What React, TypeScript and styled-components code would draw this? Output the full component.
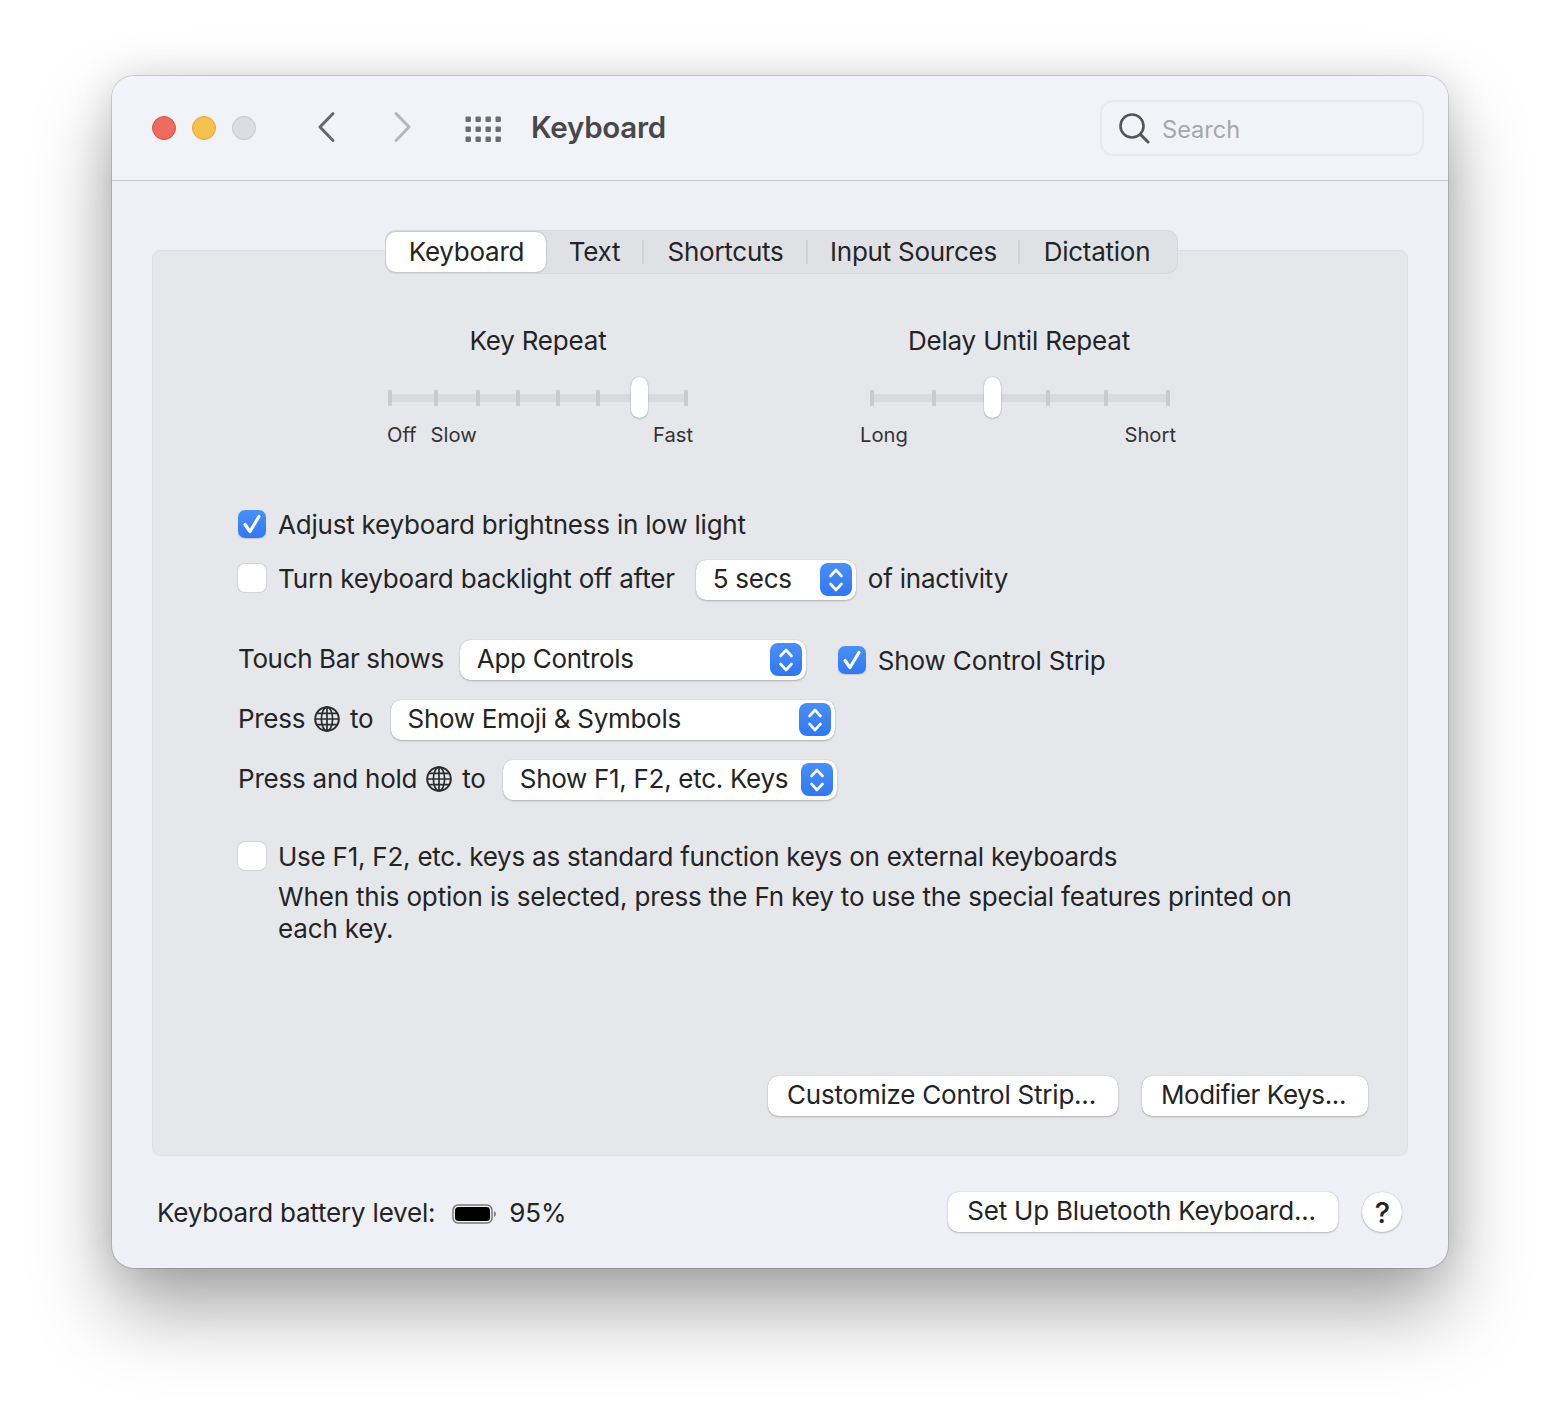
import styled, { createGlobalStyle } from "styled-components";

const GlobalStyle = createGlobalStyle`
    html, body {
        margin: 0;
        padding: 0;
        background: #ffffff;
    }

    body {
        font-family: "Inter", "Liberation Sans", sans-serif;
        color: #242426;
        -webkit-font-smoothing: antialiased;
    }
`;

const Page = styled.div`
    width: 1560px;
    height: 1416px;
    padding: 76px 112px 0;
    box-sizing: border-box;
    overflow: hidden;
`;

const Window = styled.div`
    width: 1336px;
    height: 1192px;
    border-radius: 22px;
    background: #eef0f5;
    box-shadow: 0 0 0 1px rgba(0, 0, 0, 0.14), 0 42px 80px rgba(0, 0, 0, 0.34),
        0 0 40px rgba(0, 0, 0, 0.12);
    display: flex;
    flex-direction: column;
`;

const TitleBar = styled.header`
    height: 105px;
    box-sizing: border-box;
    flex: none;
    background: #f2f3f8;
    border-bottom: 1px solid #c9cacd;
    border-radius: 22px 22px 0 0;
    padding: 0 24px 0 40px;
    display: flex;
    align-items: center;
`;

const Lights = styled.div`
    display: flex;
    gap: 16px;
    margin-right: 60px;
`;

const Light = styled.span<{ $fill: string; $edge: string }>`
    width: 24px;
    height: 24px;
    box-sizing: border-box;
    border-radius: 50%;
    background: ${(props) => props.$fill};
    border: 1px solid ${(props) => props.$edge};
`;

const NavIcon = styled.svg`
    width: 24px;
    height: 36px;
    flex: none;
    margin-top: -2px;
`;

const NavGap = styled.div`
    width: 50px;
    flex: none;
`;

const GridIcon = styled.svg`
    width: 38px;
    height: 28px;
    flex: none;
    margin: -1px 0 0 50px;
`;

const Title = styled.h1`
    font-size: 29.5px;
    font-weight: 600;
    color: #48484a;
    margin: -2px 0 0 29px;
    letter-spacing: -0.25px;
`;

const SearchBox = styled.div`
    margin-left: auto;
    width: 324px;
    height: 56px;
    box-sizing: border-box;
    margin-top: -1px;
    border: 2px solid #e8e9ee;
    border-radius: 13px;
    padding-left: 16px;
    display: flex;
    align-items: center;
    gap: 12px;
    font-size: 23.6px;
    color: #a6a7ab;
`;

const SearchText = styled.span`
    margin-top: 3px;
`;

const Body = styled.main`
    flex: 1;
    padding: 49px 40px 0;
    position: relative;
`;

const Panel = styled.section`
    margin-top: 20px;
    height: 906px;
    box-sizing: border-box;
    background: #e5e7eb;
    border: 1px solid #dfe1e5;
    border-radius: 8px;
    padding: 0 39px 0 85px;
    display: flex;
    flex-direction: column;
`;

const TabsRow = styled.div`
    display: flex;
    justify-content: center;
    margin: -21px -1px 0 -44px;
    height: 44px;
    flex: none;
`;

const Tabs = styled.div`
    width: 793px;
    box-sizing: border-box;
    height: 44px;
    display: flex;
    align-items: center;
    background: #dfe1e5;
    border-radius: 11px;
    box-shadow: inset 0 0 0 1px #d8dade;
`;

const Tab = styled.div<{ $active?: boolean; $width: number }>`
    width: ${(props) => props.$width}px;
    flex: none;
    height: 40px;
    line-height: 39px;
    padding-left: 1px;
    box-sizing: border-box;
    text-align: center;
    font-size: 26px;
    border-radius: 10px;
    background: ${(props) => (props.$active ? "#ffffff" : "transparent")};
    box-shadow: ${(props) =>
        props.$active ? "0 0 0 1px #c9cacd, 0 1px 1px rgba(0,0,0,.18)" : "none"};
    margin-left: ${(props) => (props.$active ? "1px" : "0")};
    letter-spacing: -0.26px;
`;

const TabRule = styled.span`
    width: 2px;
    height: 24px;
    flex: none;
    background: #cfd1d5;
`;

const Sliders = styled.div`
    display: flex;
    gap: 182px;
    padding-left: 150px;
    margin-top: 50px;
    flex: none;
`;

const SliderGroup = styled.div`
    width: 300px;
    display: flex;
    flex-direction: column;
`;

const SliderTitle = styled.div<{ $inset?: number }>`
    font-size: 26px;
    line-height: 34px;
    text-align: center;
    padding-right: ${(props) => props.$inset ?? 0}px;
    letter-spacing: -0.18px;
`;

const Track = styled.div`
    position: relative;
    height: 44px;
    margin-top: 18px;

    &::before {
        content: "";
        position: absolute;
        left: 0;
        right: 0;
        top: 18px;
        height: 8px;
        background: #d8dadd;
    }
`;

const Tick = styled.span<{ $at: number }>`
    position: absolute;
    left: ${(props) => props.$at}px;
    top: 14px;
    width: 4px;
    height: 16px;
    border-radius: 1px;
    background: #c8cacd;
`;

const Thumb = styled.span<{ $at: number }>`
    position: absolute;
    left: ${(props) => props.$at}px;
    top: 1px;
    width: 17px;
    height: 41px;
    border-radius: 9px;
    background: #ffffff;
    box-shadow: 0 0 1px rgba(0, 0, 0, 0.35), 0 1px 2px rgba(0, 0, 0, 0.2);
`;

const SliderLabels = styled.div<{ $left: number; $right: number }>`
    display: flex;
    justify-content: space-between;
    margin: 1px ${(props) => props.$right}px 0 ${(props) => props.$left}px;
    font-size: 20.2px;
    line-height: 28px;
    color: #333336;
`;

const LabelPair = styled.div`
    display: flex;
    gap: 14px;
`;

const FieldRow = styled.div<{ $top: number; $gap?: number }>`
    display: flex;
    align-items: center;
    height: 40px;
    flex: none;
    margin-top: ${(props) => props.$top}px;
    gap: ${(props) => props.$gap ?? 12}px;
    font-size: 26px;
    white-space: nowrap;
`;

const Label = styled.span<{ $tracking?: number }>`
    margin-bottom: 4px;
    letter-spacing: ${(props) => props.$tracking ?? -0.21}px;
`;

const CheckItem = styled.div<{ $left: number }>`
    display: flex;
    align-items: center;
    gap: 12px;
    margin: 4px 0 0 ${(props) => props.$left}px;
`;

const Box = styled.span<{ $checked?: boolean }>`
    width: 28px;
    height: 28px;
    box-sizing: border-box;
    flex: none;
    margin-bottom: 4px;
    border-radius: 7px;
    display: flex;
    align-items: center;
    justify-content: center;
    background: ${(props) =>
        props.$checked ? "linear-gradient(#4a90f8, #2f78f2)" : "#ffffff"};
    box-shadow: ${(props) =>
        props.$checked
            ? "0 1px 1px rgba(0,0,0,.15)"
            : "0 0 0 1px #d2d3d6, 0 1px 1px rgba(0,0,0,.06)"};
`;

const Select = styled.div<{ $width: number; $offset?: number }>`
    width: ${(props) => props.$width}px;
    margin-left: ${(props) => props.$offset ?? 0}px;
    height: 40px;
    box-sizing: border-box;
    flex: none;
    background: #ffffff;
    border-radius: 10px;
    box-shadow: 0 0 1px rgba(0, 0, 0, 0.3), 0 1px 2px rgba(0, 0, 0, 0.22);
    padding: 0 4px 0 17px;
    display: flex;
    align-items: center;
    justify-content: space-between;
`;

const Stepper = styled.span`
    width: 32px;
    height: 33px;
    margin-bottom: 1px;
    flex: none;
    border-radius: 8px;
    background: linear-gradient(#4a8ff7, #2f77f1);
    display: flex;
    align-items: center;
    justify-content: center;
`;

const GlobeIcon = styled.svg`
    width: 26px;
    height: 26px;
    flex: none;
    margin: 0 1px 2px 0;
`;

const Description = styled.p`
    margin: 3px 60px 0 40px;
    font-size: 26px;
    line-height: 32px;
    letter-spacing: -0.16px;
`;

const PanelActions = styled.div`
    margin-top: auto;
    margin-bottom: 39px;
    display: flex;
    justify-content: flex-end;
    gap: 24px;
`;

const Button = styled.button<{ $width: number; $tracking?: number }>`
    width: ${(props) => props.$width}px;
    height: 40px;
    padding: 0 3px 4px 0;
    border: none;
    background: #ffffff;
    border-radius: 10px;
    box-shadow: 0 0 1px rgba(0, 0, 0, 0.3), 0 1px 2px rgba(0, 0, 0, 0.22);
    font-family: inherit;
    font-size: 26px;
    letter-spacing: ${(props) => props.$tracking ?? -0.22}px;
    color: #242426;
`;

const Footer = styled.footer`
    display: flex;
    align-items: center;
    height: 40px;
    margin: 36px 6px 0 5px;
    font-size: 26px;
    letter-spacing: -0.2px;
`;

const BatteryIcon = styled.svg`
    width: 46px;
    height: 22px;
    flex: none;
    margin: 4px 11px 0 17px;
`;

const FooterActions = styled.div`
    margin-left: auto;
    display: flex;
    gap: 24px;
`;

const HelpButton = styled.button`
    width: 40px;
    height: 40px;
    padding: 0 0 0 1px;
    border: none;
    border-radius: 50%;
    background: #ffffff;
    box-shadow: 0 0 1px rgba(0, 0, 0, 0.3), 0 1px 2px rgba(0, 0, 0, 0.22);
    font-family: inherit;
    font-size: 29px;
    font-weight: 500;
    color: #242426;
`;

const Check = () => (
    <svg width="22" height="22" viewBox="0 0 22 22" fill="none">
        <path
            d="M4 11.5 L9 18.5 L18 3.5"
            stroke="#fff"
            strokeWidth="3.2"
            strokeLinecap="round"
            strokeLinejoin="round"
        />
    </svg>
);

const Arrows = () => (
    <svg width="18" height="28" viewBox="0 0 18 28" fill="none">
        <path
            d="M3.5 10 L9 4 L14.5 10 M3.5 18 L9 24 L14.5 18"
            stroke="#fff"
            strokeWidth="2.6"
            strokeLinecap="round"
            strokeLinejoin="round"
        />
    </svg>
);

const Globe = () => (
    <GlobeIcon viewBox="0 0 26 26" fill="none" stroke="#2c2c2e" strokeWidth="1.7">
        <circle cx="13" cy="13" r="11.8" strokeWidth="2" />
        <ellipse cx="13" cy="13" rx="5.6" ry="11.8" />
        <path d="M13 1.2 V24.8 M1.2 13 H24.8 M3 7.4 H23 M3 18.6 H23" />
    </GlobeIcon>
);

const Chevron = ({ d, color }: { d: string; color: string }) => (
    <NavIcon viewBox="0 0 24 36" fill="none">
        <path d={d} stroke={color} strokeWidth="3" strokeLinecap="round" strokeLinejoin="round" />
    </NavIcon>
);

const gridDots = [0, 1, 2].flatMap((row) =>
    [0, 1, 2, 3].map((col) => ({ x: 1.5 + col * 10, y: 2.5 + row * 10 }))
);

const keyRepeatTicks = [0, 46, 88, 128, 168, 208, 296];
const delayTicks = [0, 62, 176, 234, 296];

const App = () => {
    return (
        <>
            <GlobalStyle />
            <Page>
                <Window>
                    <TitleBar>
                        <Lights>
                            <Light $fill="#ee6a5f" $edge="#d9534a" />
                            <Light $fill="#f6c04f" $edge="#dea73c" />
                            <Light $fill="#dcdde1" $edge="#c5c6ca" />
                        </Lights>
                        <Chevron d="M17 4.5 L4 18 L17 31.5" color="#67686c" />
                        <NavGap />
                        <Chevron d="M6 4.5 L19 18 L6 31.5" color="#b5b6b9" />
                        <GridIcon viewBox="0 0 38 28">
                            {gridDots.map((dot) => (
                                <rect
                                    key={`${dot.x}-${dot.y}`}
                                    x={dot.x}
                                    y={dot.y}
                                    width="5.4"
                                    height="5.4"
                                    rx="1"
                                    fill="#6b6c70"
                                />
                            ))}
                        </GridIcon>
                        <Title>Keyboard</Title>
                        <SearchBox>
                            <svg width="32" height="32" viewBox="0 0 32 32" fill="none" stroke="#55565a">
                                <circle cx="14" cy="14" r="11.5" strokeWidth="2.6" />
                                <path d="M22.5 22.5 L30 30" strokeWidth="3" strokeLinecap="round" />
                            </svg>
                            <SearchText>Search</SearchText>
                        </SearchBox>
                    </TitleBar>
                    <Body>
                        <Panel>
                            <TabsRow>
                                <Tabs>
                                    <Tab $active $width={160}>Keyboard</Tab>
                                    <Tab $width={96}>Text</Tab>
                                    <TabRule />
                                    <Tab $width={162}>Shortcuts</Tab>
                                    <TabRule />
                                    <Tab $width={210}>Input Sources</Tab>
                                    <TabRule />
                                    <Tab $width={153}>Dictation</Tab>
                                </Tabs>
                            </TabsRow>
                            <Sliders>
                                <SliderGroup>
                                    <SliderTitle>Key Repeat</SliderTitle>
                                    <Track>
                                        {keyRepeatTicks.map((at) => (
                                            <Tick key={at} $at={at} />
                                        ))}
                                        <Thumb $at={243} />
                                    </Track>
                                    <SliderLabels $left={-1} $right={-5}>
                                        <LabelPair>
                                            <span>Off</span>
                                            <span>Slow</span>
                                        </LabelPair>
                                        <span>Fast</span>
                                    </SliderLabels>
                                </SliderGroup>
                                <SliderGroup>
                                    <SliderTitle $inset={2}>Delay Until Repeat</SliderTitle>
                                    <Track>
                                        {delayTicks.map((at) => (
                                            <Tick key={at} $at={at} />
                                        ))}
                                        <Thumb $at={114} />
                                    </Track>
                                    <SliderLabels $left={-10} $right={-6}>
                                        <span>Long</span>
                                        <span>Short</span>
                                    </SliderLabels>
                                </SliderGroup>
                            </Sliders>
                            <FieldRow $top={57}>
                                <Box $checked>
                                    <Check />
                                </Box>
                                <Label>Adjust keyboard brightness in low light</Label>
                            </FieldRow>
                            <FieldRow $top={14}>
                                <Box />
                                <Label $tracking={-0.17}>Turn keyboard backlight off after</Label>
                                <Select $width={160} $offset={9}>
                                    <Label $tracking={-0.3}>5 secs</Label>
                                    <Stepper>
                                        <Arrows />
                                    </Stepper>
                                </Select>
                                <Label>of inactivity</Label>
                            </FieldRow>
                            <FieldRow $top={40} $gap={16}>
                                <Label $tracking={-0.36}>Touch Bar shows</Label>
                                <Select $width={346}>
                                    <Label $tracking={-0.3}>App Controls</Label>
                                    <Stepper>
                                        <Arrows />
                                    </Stepper>
                                </Select>
                                <CheckItem $left={16}>
                                    <Box $checked>
                                        <Check />
                                    </Box>
                                    <Label $tracking={-0.14}>Show Control Strip</Label>
                                </CheckItem>
                            </FieldRow>
                            <FieldRow $top={20} $gap={9}>
                                <Label $tracking={-0.3}>Press</Label>
                                <Globe />
                                <Label>to</Label>
                                <Select $width={444} $offset={8}>
                                    <Label $tracking={-0.3}>Show Emoji &amp; Symbols</Label>
                                    <Stepper>
                                        <Arrows />
                                    </Stepper>
                                </Select>
                            </FieldRow>
                            <FieldRow $top={20} $gap={9}>
                                <Label>Press and hold</Label>
                                <Globe />
                                <Label>to</Label>
                                <Select $width={334} $offset={8}>
                                    <Label $tracking={-0.3}>Show F1, F2, etc. Keys</Label>
                                    <Stepper>
                                        <Arrows />
                                    </Stepper>
                                </Select>
                            </FieldRow>
                            <FieldRow $top={38}>
                                <Box />
                                <Label $tracking={-0.24}>Use F1, F2, etc. keys as standard function keys on external keyboards</Label>
                            </FieldRow>
                            <Description>
                                When this option is selected, press the Fn key to use the special
                                features printed on each key.
                            </Description>
                            <PanelActions>
                                <Button $width={350}>Customize Control Strip...</Button>
                                <Button $width={226} $tracking={-0.4}>Modifier Keys...</Button>
                            </PanelActions>
                        </Panel>
                        <Footer>
                            Keyboard battery level:
                            <BatteryIcon viewBox="0 0 46 22">
                                <rect x="1" y="2" width="39" height="18" rx="5" fill="none" stroke="#77787b" strokeWidth="1.5" />
                                <rect x="3" y="4" width="35" height="14" rx="3.5" fill="#000" />
                                <path d="M42 8 C44.5 9 44.5 13 42 14 Z" fill="#77787b" />
                            </BatteryIcon>
                            95%
                            <FooterActions>
                                <Button $width={390}>Set Up Bluetooth Keyboard...</Button>
                                <HelpButton>?</HelpButton>
                            </FooterActions>
                        </Footer>
                    </Body>
                </Window>
            </Page>
        </>
    );
};

export default App;
